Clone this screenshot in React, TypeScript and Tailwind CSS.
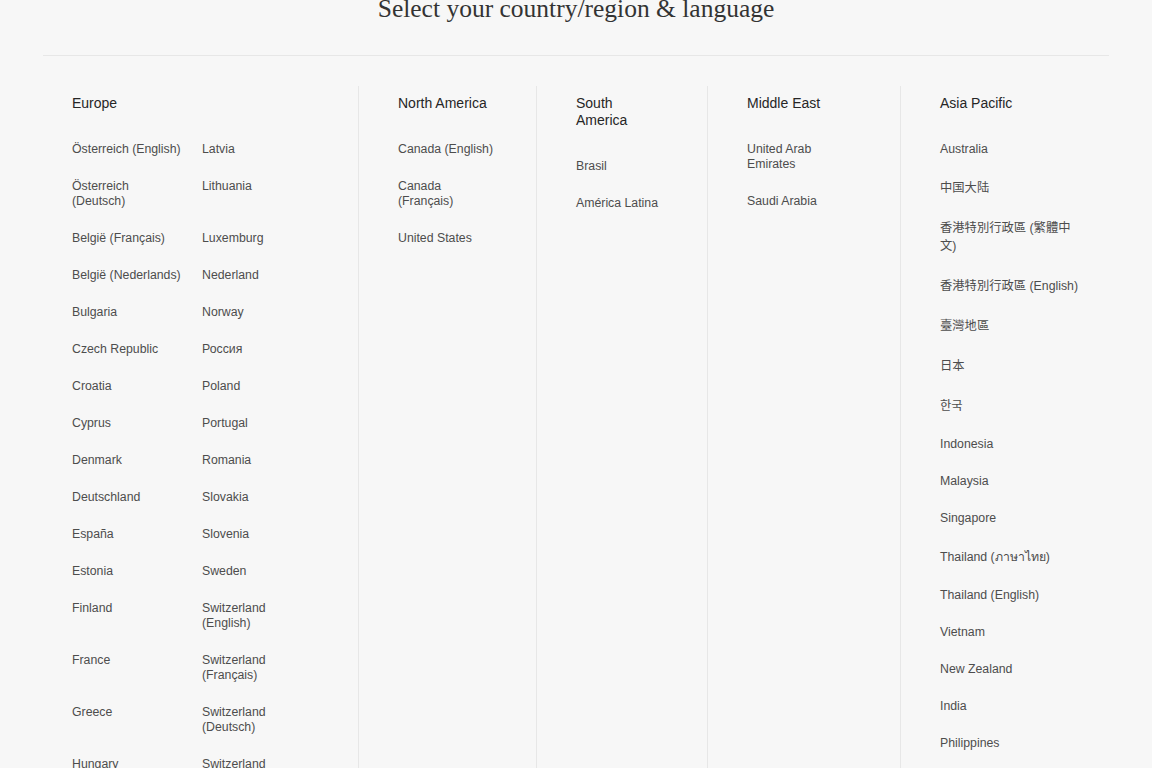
const sans = '"Liberation Sans", "Noto Sans CJK TC", "Noto Sans CJK KR", "Noto Sans", sans-serif';

const europe: [string, string][] = [
  ['Österreich (English)', 'Latvia'],
  ['Österreich (Deutsch)', 'Lithuania'],
  ['België (Français)', 'Luxemburg'],
  ['België (Nederlands)', 'Nederland'],
  ['Bulgaria', 'Norway'],
  ['Czech Republic', 'Россия'],
  ['Croatia', 'Poland'],
  ['Cyprus', 'Portugal'],
  ['Denmark', 'Romania'],
  ['Deutschland', 'Slovakia'],
  ['España', 'Slovenia'],
  ['Estonia', 'Sweden'],
  ['Finland', 'Switzerland (English)'],
  ['France', 'Switzerland (Français)'],
  ['Greece', 'Switzerland (Deutsch)'],
  ['Hungary', 'Switzerland (Italiano)'],
  ['Ireland', 'Türkiye'],
  ['Italia', 'United Kingdom'],
];

type Item = { label: string; tall?: boolean };

const regions: { title: string; width: string; headWidth: string; textWidth: string; items: Item[] }[] = [
  {
    title: 'North America',
    width: 'w-[178px]',
    headWidth: 'max-w-[120px]',
    textWidth: 'max-w-[98px]',
    items: [{ label: 'Canada (English)' }, { label: 'Canada (Français)' }, { label: 'United States' }],
  },
  {
    title: 'South America',
    width: 'w-[171px]',
    headWidth: 'max-w-[80px]',
    textWidth: 'max-w-[92px]',
    items: [{ label: 'Brasil' }, { label: 'América Latina' }],
  },
  {
    title: 'Middle East',
    width: 'w-[193px]',
    headWidth: 'max-w-[120px]',
    textWidth: 'max-w-[100px]',
    items: [{ label: 'United Arab Emirates' }, { label: 'Saudi Arabia' }],
  },
  {
    title: 'Asia Pacific',
    width: 'w-[209px]',
    headWidth: 'max-w-[140px]',
    textWidth: 'max-w-[140px]',
    items: [
      { label: 'Australia' },
      { label: '中国大陆', tall: true },
      { label: '香港特別行政區 (繁體中文)', tall: true },
      { label: '香港特別行政區 (English)', tall: true },
      { label: '臺灣地區', tall: true },
      { label: '日本', tall: true },
      { label: '한국', tall: true },
      { label: 'Indonesia' },
      { label: 'Malaysia' },
      { label: 'Singapore' },
      { label: 'Thailand (ภาษาไทย)', tall: true },
      { label: 'Thailand (English)' },
      { label: 'Vietnam' },
      { label: 'New Zealand' },
      { label: 'India' },
      { label: 'Philippines' },
    ],
  },
];

function Heading({ children, className = '' }: { children: string; className?: string }) {
  return (
    <h2 className={`pt-[9px] text-[14px] leading-[17px] font-medium text-[#262626] ${className}`}>{children}</h2>
  );
}

export default function App() {
  return (
    <div className="min-h-screen overflow-hidden bg-[#f7f7f7] px-[43px]" style={{ fontFamily: sans }}>
      <h1
        className="mt-[-7px] text-center text-[25.5px] leading-[32px] text-[#333]"
        style={{ fontFamily: '"Liberation Serif", serif' }}
      >
        Select your country/region &amp; language
      </h1>
      <div className="mt-[30px] border-t border-[#e7e7e7]" />

      <div className="mt-[30px] flex">
        {/* Europe */}
        <div className="w-[315px] shrink-0 pl-[29px]">
          <Heading>Europe</Heading>
          <div className="mt-[30px] grid grid-cols-[110px_110px] gap-x-[20px] gap-y-[22px] pb-10">
            {europe.flatMap(([a, b]) => [a, b]).map((name) => (
              <a key={name} className="text-[12.3px] leading-[15px] text-[#4d4d4d]">
                {name}
              </a>
            ))}
          </div>
        </div>

        {regions.map((r) => (
          <div key={r.title} className={`${r.width} shrink-0 border-l border-[#e7e7e7] pl-[39px]`}>
            <Heading className={r.headWidth}>{r.title}</Heading>
            <ul className="mt-[30px] flex flex-col gap-[22px]">
              {r.items.map((it) => (
                <li
                  key={it.label}
                  className={`${r.textWidth} text-[12.3px] text-[#4d4d4d] ${it.tall ? 'leading-[18px]' : 'leading-[15px]'}`}
                >
                  {it.label}
                </li>
              ))}
            </ul>
          </div>
        ))}
      </div>
    </div>
  );
}
